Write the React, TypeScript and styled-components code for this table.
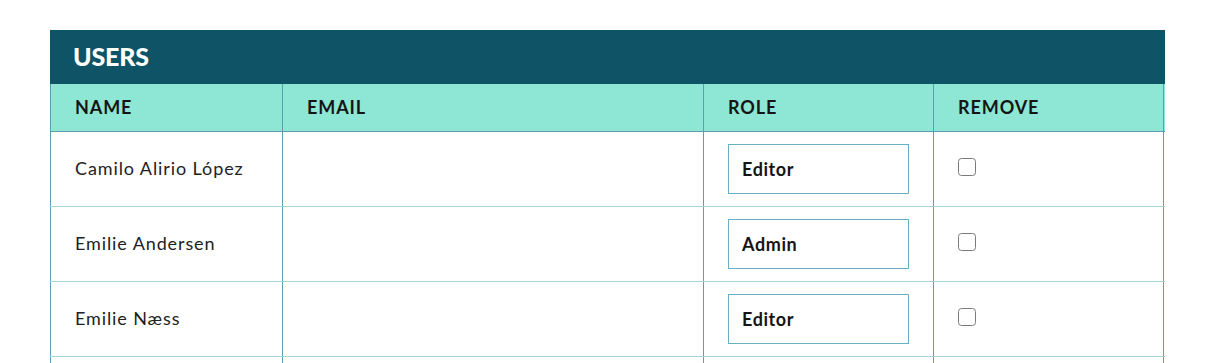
import React from 'react'
import styled, { createGlobalStyle } from 'styled-components'

const GlobalStyle = createGlobalStyle`
  html, body {
    margin: 0;
    padding: 0;
    background: #ffffff;
    font-family: Lato, 'Noto Sans', sans-serif;
  }
`

const COLUMNS = '232px 421px 230px 231px'

type User = {
  name: string
  email: string
  role: string
}

const users: User[] = [
  { name: 'Camilo Alirio López', email: '', role: 'Editor' },
  { name: 'Emilie Andersen', email: '', role: 'Admin' },
  { name: 'Emilie Næss', email: '', role: 'Editor' },
  { name: '', email: '', role: '' },
]

const Page = styled.div`
  padding: 30px 0 0 50px;
  height: 363px;
  box-sizing: border-box;
  overflow: hidden;
`

const Panel = styled.section`
  width: 1115px;
`

const TitleBar = styled.h2`
  margin: 0;
  height: 54px;
  box-sizing: border-box;
  padding: 0 23px 3px;
  display: flex;
  align-items: center;
  background: #0e5366;
  color: #ffffff;
  font-size: 25px;
  font-weight: 900;
  letter-spacing: -0.2px;
`

const Row = styled.div<{ $head?: boolean }>`
  display: grid;
  grid-template-columns: ${COLUMNS};
  height: ${({ $head }) => ($head ? '48px' : '75px')};
  box-sizing: border-box;
  background: ${({ $head }) => ($head ? '#8ee6d4' : '#ffffff')};
  border-bottom: 1px solid ${({ $head }) => ($head ? '#5b9fb0' : '#a5d4e0')};
`

const Cell = styled.div<{ $head?: boolean }>`
  display: flex;
  align-items: center;
  padding: ${({ $head }) => ($head ? '0 24px 1px' : '0 24px 2px')};
  border-left: 1px solid #5b9fb0;
  box-sizing: border-box;
  color: ${({ $head }) => ($head ? '#151515' : '#222222')};
  font-size: 18px;
  font-weight: ${({ $head }) => ($head ? 700 : 400)};
  letter-spacing: 0.9px;

  &:last-child {
    border-right: 1px solid #5b9fb0;
  }
`

const RoleBox = styled.div`
  width: 181px;
  height: 50px;
  margin-top: 2px;
  box-sizing: border-box;
  border: 1px solid #6ab0c4;
  display: flex;
  align-items: center;
  padding: 0 13px;
  font-size: 18px;
  font-weight: 700;
  letter-spacing: 0.6px;
  color: #151515;
`

const Check = styled.span`
  width: 18px;
  height: 18px;
  box-sizing: border-box;
  border: 1.5px solid #7a7a7a;
  border-radius: 3.5px;
  margin-top: -3px;
`

const App: React.FC = () => (
  <Page>
    <GlobalStyle />
    <Panel>
      <TitleBar>USERS</TitleBar>
      <Row $head>
        <Cell $head>NAME</Cell>
        <Cell $head>EMAIL</Cell>
        <Cell $head>ROLE</Cell>
        <Cell $head>REMOVE</Cell>
      </Row>
      {users.map((user, i) => (
        <Row key={i}>
          <Cell>{user.name}</Cell>
          <Cell>{user.email}</Cell>
          <Cell>{user.role && <RoleBox>{user.role}</RoleBox>}</Cell>
          <Cell>{user.role && <Check />}</Cell>
        </Row>
      ))}
    </Panel>
  </Page>
)

export default App
